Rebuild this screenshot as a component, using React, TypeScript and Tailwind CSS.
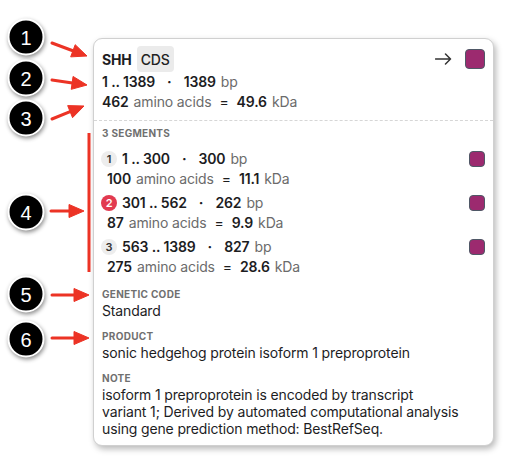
import React from "react";

interface Segment {
  id: number;
  start: string;
  end: string;
  bp: string;
  aa: string;
  kda: string;
  active?: boolean;
}

const SEGMENTS: Segment[] = [
  { id: 1, start: "1", end: "300", bp: "300", aa: "100", kda: "11.1" },
  { id: 2, start: "301", end: "562", bp: "262", aa: "87", kda: "9.9", active: true },
  { id: 3, start: "563", end: "1389", bp: "827", aa: "275", kda: "28.6" },
];

// callout markers round the card
const CALLOUTS = [
  { n: 1, x: 26, y: 37 },
  { n: 2, x: 26, y: 78 },
  { n: 3, x: 26, y: 118 },
  { n: 4, x: 26, y: 212 },
  { n: 5, x: 26, y: 294 },
  { n: 6, x: 26, y: 339 },
];

const ARROWS: [number, number, number, number][] = [
  [52, 43, 87, 56],
  [52, 80, 87, 85],
  [52, 119, 84, 106],
  [51, 211, 84, 211],
  [52, 295, 89, 295],
  [52, 338, 89, 338],
];

const arrowHead = (x1: number, y1: number, x2: number, y2: number) => {
  const len = Math.hypot(x2 - x1, y2 - y1);
  const ux = (x2 - x1) / len;
  const uy = (y2 - y1) / len;
  const bx = x2 - ux * 15;
  const by = y2 - uy * 15;
  const px = -uy * 6.5;
  const py = ux * 6.5;
  return {
    line: { x2: bx + ux * 2, y2: by + uy * 2 },
    points: `${x2},${y2} ${bx + px},${by + py} ${bx - px},${by - py}`,
  };
};

const Swatch: React.FC<{ big?: boolean }> = ({ big }) => (
  <div
    className={`${
      big ? "w-5 h-5" : "w-4 h-4 mt-0.5"
    } rounded-[4px] bg-[#9c2a6f] border border-[#4f5866] flex-shrink-0`}
  />
);

const Unit: React.FC<{ children: React.ReactNode }> = ({ children }) => (
  <span className="ml-[5px] font-normal text-[#6b6b6b]">{children}</span>
);

const Dot = () => <span className="mx-[12px] font-bold">·</span>;
const Eq = () => <span className="mx-2 font-normal">=</span>;

const Label: React.FC<{ children: React.ReactNode }> = ({ children }) => (
  <div className="text-[10px] leading-3 font-bold tracking-[0.03em] text-[#707070] uppercase">
    {children}
  </div>
);

const App: React.FC = () => {
  return (
    <div
      className="relative w-[508px] h-[458px] bg-white pt-[38px] pl-[93px] text-[#1d1d1f]"
      style={{ fontFamily: "Inter, 'Noto Sans', sans-serif" }}
    >
      {/* Card */}
      <div className="w-[401px] bg-white rounded-[9px] border border-[#d0d0d0] shadow-[2px_3px_6px_rgba(0,0,0,0.28)] text-[14px] tracking-[-0.01em]">
        {/* Header */}
        <div className="px-2 pt-[7px] pb-2 border-b border-dashed border-[#d6d6d6]">
          <div className="h-[26px] flex items-center justify-between">
            <div className="flex items-center gap-[5px]">
              <span className="font-bold">SHH</span>
              <span className="h-[26px] px-[4px] flex items-center rounded-[4px] bg-[#ebebeb] font-medium text-[#222]">
                CDS
              </span>
            </div>
            <div className="flex items-center gap-[13px]">
              <svg width="17" height="12" viewBox="0 0 17 12" fill="none">
                <path
                  d="M0.5 6h15M10.5 1l5 5-5 5"
                  stroke="#333"
                  strokeWidth="1.5"
                  strokeLinecap="round"
                  strokeLinejoin="round"
                />
              </svg>
              <Swatch big />
            </div>
          </div>
          <div className="leading-5 font-semibold">
            1 .. 1389
            <Dot />
            1389<Unit>bp</Unit>
          </div>
          <div className="leading-5 font-semibold">
            462<Unit>amino acids</Unit>
            <Eq />
            49.6<Unit>kDa</Unit>
          </div>
        </div>

        {/* Body */}
        <div className="px-2 pt-[6px] pb-2 flex flex-col gap-[11px]">
          <div>
            <Label>3 segments</Label>
            <div className="mt-2.5 flex flex-col gap-1">
              {SEGMENTS.map((s) => (
                <div key={s.id} className="flex items-start justify-between">
                  <div className="leading-5 font-semibold">
                    <div className="flex items-center">
                      <span
                        className={`w-4 h-4 -ml-px mr-[5px] rounded-full flex items-center justify-center text-[11px] font-semibold ${
                          s.active
                            ? "bg-[#e23a50] text-white"
                            : "bg-[#ededed] text-[#333]"
                        }`}
                      >
                        {s.id}
                      </span>
                      {s.start} .. {s.end}
                      <Dot />
                      {s.bp}
                      <Unit>bp</Unit>
                    </div>
                    <div className="ml-[5px]">
                      {s.aa}
                      <Unit>amino acids</Unit>
                      <Eq />
                      {s.kda}
                      <Unit>kDa</Unit>
                    </div>
                  </div>
                  <Swatch />
                </div>
              ))}
            </div>
          </div>

          <div>
            <Label>Genetic code</Label>
            <div className="mt-0.5 leading-[17px]">Standard</div>
          </div>

          <div>
            <Label>Product</Label>
            <div className="mt-0.5 leading-[17px]">
              sonic hedgehog protein isoform 1 preproprotein
            </div>
          </div>

          <div>
            <Label>Note</Label>
            <div className="mt-0.5 leading-[17px]">
              isoform 1 preproprotein is encoded by transcript
              <br />
              variant 1; Derived by automated computational analysis
              <br />
              using gene prediction method: BestRefSeq.
            </div>
          </div>
        </div>
      </div>

      {/* Annotation arrows */}
      <svg
        className="absolute left-0 top-0 pointer-events-none"
        width="508"
        height="458"
        viewBox="0 0 508 458"
      >
        <line x1="89" y1="133" x2="89" y2="272" stroke="#ec3325" strokeWidth="3" />
        {ARROWS.map(([x1, y1, x2, y2], i) => {
          const h = arrowHead(x1, y1, x2, y2);
          return (
            <g key={i} fill="#ec3325" stroke="#ec3325">
              <line
                x1={x1}
                y1={y1}
                x2={h.line.x2}
                y2={h.line.y2}
                strokeWidth="3"
                strokeLinecap="round"
              />
              <polygon points={h.points} strokeWidth="1" strokeLinejoin="round" />
            </g>
          );
        })}
      </svg>

      {/* Numbered callouts */}
      {CALLOUTS.map((c) => (
        <div
          key={c.n}
          className="absolute w-[37px] h-[37px] -translate-x-1/2 -translate-y-1/2 rounded-full bg-black border-2 border-white shadow-[1px_2px_4px_rgba(0,0,0,0.45)] flex items-center justify-center text-white text-[20px]"
          style={{ left: c.x, top: c.y, fontFamily: "'Liberation Sans', Arial, sans-serif" }}
        >
          {c.n}
        </div>
      ))}
    </div>
  );
};

export default App;
